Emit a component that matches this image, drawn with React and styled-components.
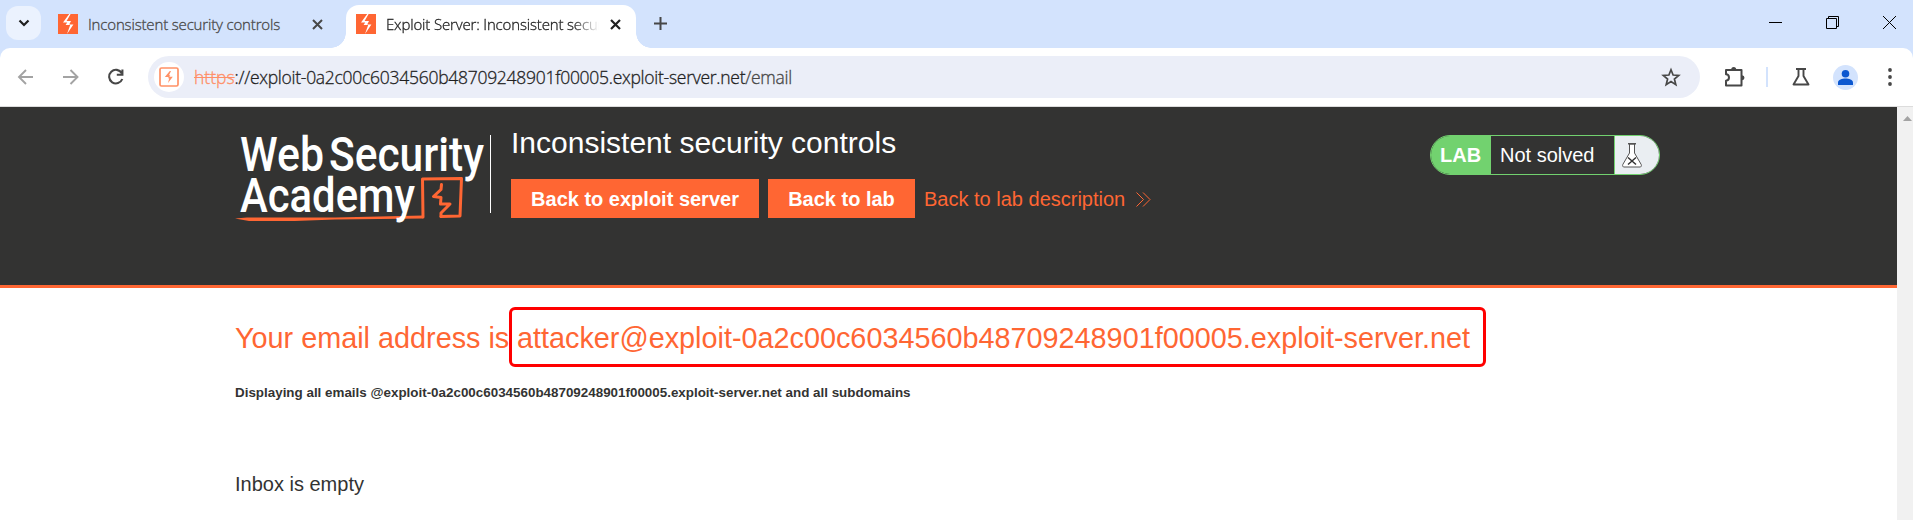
import React from "react";
import styled, { createGlobalStyle } from "styled-components";

const GlobalStyle = createGlobalStyle`
  *, *::before, *::after { box-sizing: border-box; }
  html, body { margin: 0; height: 100%; overflow: hidden; background: #fff; }
  body { font-family: "Liberation Sans", Arial, sans-serif; color: #333332; }
  svg { display: block; flex: none; }
`;

const Browser = styled.div`
  display: flex;
  flex-direction: column;
  height: 520px;
  width: 1913px;
`;

const TabStrip = styled.div`
  display: flex;
  height: 48px;
  flex: none;
  background: #d3e3fd;
  font-family: "Open Sans", "Noto Sans", sans-serif;
  font-weight: 300;
`;

const TabSearch = styled.div`
  width: 35px;
  height: 34px;
  margin: 6px 0 0 6px;
  border-radius: 12px;
  background: #ebf2fe;
  display: flex;
  align-items: center;
  justify-content: center;
`;

const Tab = styled.div`
  position: relative;
  display: flex;
  align-items: center;
  width: ${(p) => p.$width}px;
  height: 43px;
  margin: 5px 0 0 ${(p) => p.$gap}px;
  padding: 0 15px 5px 10px;
  color: ${(p) => (p.$active ? "#1f1f1f" : "#474747")};
  background: ${(p) => (p.$active ? "#fff" : "transparent")};
  border-radius: 13px 13px 0 0;
  ${(p) =>
    p.$active &&
    `
    &::before, &::after {
      content: "";
      position: absolute;
      bottom: 0;
      width: 15px;
      height: 15px;
    }
    &::before {
      left: -15px;
      background: radial-gradient(circle at 0 0, transparent 14.5px, #fff 15px);
    }
    &::after {
      right: -15px;
      background: radial-gradient(circle at 100% 0, transparent 14.5px, #fff 15px);
    }
  `}
`;

const TabTitle = styled.span`
  flex: 1;
  margin-left: 10px;
  margin-right: 11px;
  overflow: hidden;
  white-space: nowrap;
  font-size: 15px;
  line-height: 24px;
  letter-spacing: -0.16px;
  -webkit-text-stroke: 0.3px currentColor;
  ${(p) =>
    p.$fade && "mask-image: linear-gradient(to right, #000 88%, transparent 100%);"}
`;

const NewTab = styled.div`
  margin: 17px 0 0 18px;
`;

const WindowControls = styled.div`
  display: flex;
  gap: 44px;
  margin: 16px 17px 0 auto;
`;

const Toolbar = styled.div`
  display: flex;
  align-items: center;
  height: 59px;
  flex: none;
  background: linear-gradient(#d3e3fd 12px, #fff 12px);
  border-bottom: 1px solid #dcdcdc;
`;

const ToolbarInner = styled.div`
  display: flex;
  align-items: center;
  width: 100%;
  height: 58px;
  padding: 0 20px 0 16px;
  background: #fff;
  border-radius: 10px 10px 0 0;
`;

const NavButtons = styled.div`
  display: flex;
  gap: 25px;
  width: 132px;
`;

const AddressBar = styled.div`
  display: flex;
  align-items: center;
  width: 1552px;
  height: 42px;
  padding: 0 19px 0 6px;
  border-radius: 21px;
  background: #ebeef8;
`;

const SiteChip = styled.div`
  display: flex;
  align-items: center;
  justify-content: center;
  width: 30px;
  height: 30px;
  border-radius: 50%;
  background: #fff;
`;

const Url = styled.div`
  flex: 1;
  margin-left: 10px;
  font-family: "Open Sans", "Noto Sans", sans-serif;
  font-weight: 300;
  font-size: 17.5px;
  line-height: 24px;
  letter-spacing: -0.27px;
  -webkit-text-stroke: 0.3px currentColor;
  white-space: nowrap;
  color: #1f1f1f;
`;

const Scheme = styled.span`
  color: #ff8e66;
  letter-spacing: 0;
  text-decoration: line-through;
`;

const Path = styled.span`
  color: #474747;
`;

const ToolbarActions = styled.div`
  display: flex;
  align-items: center;
  margin-left: 23px;
`;

const Separator = styled.div`
  width: 2px;
  height: 20px;
  margin: 0 24px 0 21px;
  background: #d3e3fd;
`;

const Avatar = styled.div`
  width: 25px;
  height: 25px;
  margin: 0 30px 0 23px;
  border-radius: 50%;
  background: #d3e3fd;
`;

const Viewport = styled.div`
  display: flex;
  flex: 1;
  min-height: 0;
`;

const Page = styled.main`
  flex: 1;
  background: #fff;
`;

const Scrollbar = styled.div`
  width: 16px;
  padding: 9px 0 0 6px;
  background: #f1f1f1;
`;

const LabHeader = styled.header`
  display: flex;
  height: 181px;
  padding: 0 237px 0 235px;
  background: #333332;
  border-bottom: 3px solid #ff6633;
`;

const LogoArea = styled.div`
  width: 256px;
  height: 78px;
  margin-top: 28px;
  border-right: 1px solid #fff;
  svg { overflow: visible; }
`;

const TitleArea = styled.div`
  margin-left: 20px;
`;

const LabTitle = styled.h2`
  margin: 18px 0 0;
  height: 54px;
  font-size: 30px;
  font-weight: 400;
  line-height: 36px;
  color: #fff;
`;

const Actions = styled.div`
  display: flex;
  align-items: center;
  height: 39px;
`;

const Button = styled.a`
  width: ${(p) => p.$width}px;
  height: 39px;
  margin-right: 9px;
  background: #ff6633;
  color: #fff;
  font-size: 20px;
  font-weight: 700;
  line-height: 40px;
  text-align: center;
  white-space: nowrap;
`;

const BackLink = styled.a`
  display: flex;
  align-items: center;
  gap: 11px;
  padding-top: 1px;
  color: #ff6633;
  font-size: 20px;
  white-space: nowrap;
`;

const LabStatus = styled.div`
  display: flex;
  width: 230px;
  height: 40px;
  margin: 28px 0 0 auto;
  border: 1px solid #72d26f;
  border-radius: 20px;
  overflow: hidden;
  color: #fff;
  font-size: 20px;
  line-height: 38px;
`;

const StatusLabel = styled.span`
  width: 60px;
  padding-left: 9px;
  background: #72d26f;
  font-weight: 700;
  line-height: 39px;
`;

const StatusText = styled.span`
  width: 124px;
  padding-left: 9px;
  border-right: 1px solid #72d26f;
`;

const StatusIcon = styled.span`
  flex: 1;
  padding: 7px 0 0 7px;
  background: #eaeef2;
`;

const Content = styled.section`
  padding: 19px 0 0 235px;
`;

const EmailHeading = styled.h1`
  display: flex;
  margin: 0;
  height: 60px;
  font-size: 28.8px;
  font-weight: 400;
  line-height: 56px;
  white-space: nowrap;
  color: #ff6633;
`;

const HeadingLabel = styled.span`
  width: 274px;
  padding-top: 3px;
`;

const Highlight = styled.span`
  width: 977px;
  height: 60px;
  padding-left: 5px;
  border: 3px solid #ff0000;
  border-radius: 6px;
`;

const Note = styled.p`
  margin: 16px 0 0;
  font-size: 13.4px;
  font-weight: 700;
  line-height: 20px;
`;

const Inbox = styled.p`
  margin: 69px 0 0;
  font-size: 20px;
  line-height: 24px;
`;

const Favicon = () => (
  <svg width="20" height="20" viewBox="0 0 20 20">
    <rect width="20" height="20" fill="#ff6633" />
    <path d="M11.2 0 5 8.4h4.2L7.6 11h4.6L9 20l6.4-9.6h-4.2L13 7H8.6L12.6 0Z" fill="#fff" />
  </svg>
);

const CloseIcon = ({ color, width = 2 }) => (
  <svg width="11" height="11" viewBox="0 0 11 11" stroke={color} strokeWidth={width}>
    <path d="m1 1 9 9M10 1l-9 9" />
  </svg>
);

const Logo = () => (
  <svg width="254" height="88" viewBox="0 0 254 88" fontFamily="Roboto, sans-serif" fontSize="48" fontWeight="500" fill="#fff">
    <path d="M0 83.500 12 82.500 100 82.500 188 80.500V83.500L100 84.500 60 86H14Z" fill="#ff6633" />
    <g fill="none" stroke="#ff6633" strokeLinecap="round" strokeLinejoin="round">
      <path d="M188 82 187.500 44 226.500 43.500 225 81 206 81.500" strokeWidth="3" />
      <path d="M206.500 49.500 206 54.500 198.500 61.500 206 62.500 205.500 69 215 69 206 78 206 81.500" strokeWidth="3" />
    </g>
    <text x="5" y="36" textLength="84" lengthAdjust="spacingAndGlyphs">Web</text>
    <text x="94" y="36" textLength="155" lengthAdjust="spacingAndGlyphs">Security</text>
    <text x="5" y="77" textLength="175" lengthAdjust="spacingAndGlyphs">Academy</text>
  </svg>
);

export default function App() {
  return (
    <Browser>
      <GlobalStyle />
      <TabStrip>
        <TabSearch>
          <svg width="12" height="8" viewBox="0 0 12 8" fill="none" stroke="#1f1f1f" strokeWidth="2.2">
            <path d="m1.500 1.500 4.500 4.500 4.500-4.500" />
          </svg>
        </TabSearch>
        <Tab $width={290} $gap={7}>
          <Favicon />
          <TabTitle>Inconsistent security controls</TabTitle>
          <CloseIcon color="#474747" />
        </Tab>
        <Tab $active $width={290} $gap={8}>
          <Favicon />
          <TabTitle $fade>Exploit Server: Inconsistent security controls</TabTitle>
          <CloseIcon color="#1f1f1f" width={2.2} />
        </Tab>
        <NewTab>
          <svg width="13" height="13" viewBox="0 0 13 13" stroke="#474747" strokeWidth="2">
            <path d="M6.500 0v13M0 6.500h13" />
          </svg>
        </NewTab>
        <WindowControls>
          <svg width="13" height="13" viewBox="0 0 13 13" stroke="#000"><path d="M0 6.500h13" /></svg>
          <svg width="13" height="13" viewBox="0 0 13 13" fill="none" stroke="#000">
            <path d="M.5 2.500h10v10H.5zM2.500 2.500v-2h10v10h-2" />
          </svg>
          <svg width="13" height="13" viewBox="0 0 13 13" stroke="#000"><path d="m0 0 13 13M13 0 0 13" /></svg>
        </WindowControls>
      </TabStrip>

      <Toolbar>
        <ToolbarInner>
          <NavButtons>
            <svg width="20" height="20" viewBox="0 0 20 20" fill="none" stroke="#a3a3a3" strokeWidth="1.9">
              <path d="M17 10H3M10 3 3 10l7 7" />
            </svg>
            <svg width="20" height="20" viewBox="0 0 20 20" fill="none" stroke="#a3a3a3" strokeWidth="1.9">
              <path d="M2 10h14M9.500 3l7 7-7 7" />
            </svg>
            <svg width="20" height="20" viewBox="0 0 20 20" fill="none" stroke="#474747" strokeWidth="2.100">
              <path d="M15.800 6.200A6.800 6.800 0 1 0 16.300 12M16.400 2.500v5.300h-5.600" />
            </svg>
          </NavButtons>
          <AddressBar>
            <SiteChip>
              <svg width="20" height="20" viewBox="0 0 20 20">
                <rect x="1" y="1" width="18" height="18" rx="1.500" fill="none" stroke="#ff9166" strokeWidth="1.700" />
                <path d="M10.800 4 5.800 10h4l-1 1.200h1.400L9 16l4.800-6.300h-3.500l1-1.500H10L12 4Z" fill="#ff9166" />
              </svg>
            </SiteChip>
            <Url>
              <Scheme>https</Scheme>://exploit-0a2c00c6034560b48709248901f00005.exploit-server.net<Path>/email</Path>
            </Url>
            <svg width="20" height="20" viewBox="0 0 20 20" fill="none" stroke="#474747" strokeWidth="1.700">
              <path d="m10 2.800 2.100 5.200 5.600.4-4.300 3.600 1.400 5.600-4.800-3-4.800 3 1.400-5.600-4.300-3.600 5.600-.4Z" />
            </svg>
          </AddressBar>
          <ToolbarActions>
            <svg width="22" height="22" viewBox="0 0 22 22">
              <path d="M3 4h15.500v15.500H3v-4.700c4-.6 4-6.200 0-6.500Z" fill="none" stroke="#474747" strokeWidth="2" strokeLinejoin="round" />
              <path d="M8.200 3.500a2.500 2.500 0 0 1 5 0ZM19 9.200a2.500 2.500 0 0 1 0 5Z" fill="#474747" />
            </svg>
            <Separator />
            <svg width="18" height="20" viewBox="0 0 18 20" fill="none" stroke="#474747" strokeWidth="1.900">
              <path d="M4 2h10M6.500 2v7L1.500 17.500h15L11.500 9V2" strokeLinejoin="round" />
            </svg>
            <Avatar>
              <svg width="25" height="25" viewBox="0 0 25 25" fill="#0b57d0">
                <circle cx="12.500" cy="8.700" r="3.800" />
                <path d="M5 20v-2.500c0-2.700 4.200-4 7.500-4s7.500 1.300 7.500 4V20Z" />
              </svg>
            </Avatar>
            <svg width="4" height="20" viewBox="0 0 4 20" fill="#474747">
              <circle cx="2" cy="3" r="1.900" /><circle cx="2" cy="10" r="1.900" /><circle cx="2" cy="17" r="1.900" />
            </svg>
          </ToolbarActions>
        </ToolbarInner>
      </Toolbar>

      <Viewport>
        <Page>
          <LabHeader>
            <LogoArea><Logo /></LogoArea>
            <TitleArea>
              <LabTitle>Inconsistent security controls</LabTitle>
              <Actions>
                <Button $width={248}>Back to exploit server</Button>
                <Button $width={147}>Back to lab</Button>
                <BackLink>
                  Back to lab description
                  <svg width="15" height="15" viewBox="0 0 15 15" fill="none" stroke="#ff6633">
                    <path d="m.5.500 7 7-7 7M7 .5l7 7-7 7" />
                  </svg>
                </BackLink>
              </Actions>
            </TitleArea>
            <LabStatus>
              <StatusLabel>LAB</StatusLabel>
              <StatusText>Not solved</StatusText>
              <StatusIcon>
                <svg width="20" height="25" viewBox="0 0 20 25" fill="#fff" stroke="#555">
                  <path d="M7.500 1v9L.8 21.500c-.5 1.500 0 2.500 1.200 2.500h16c1.200 0 1.700-1 1.200-2.500L12.500 10V1Z" />
                  <path d="M6 .8h8" strokeWidth="1.500" />
                  <path d="m6 14.500 8 7M14 14.500l-8 7" stroke="#333" strokeWidth="1.500" />
                </svg>
              </StatusIcon>
            </LabStatus>
          </LabHeader>
          <Content>
            <EmailHeading>
              <HeadingLabel>Your email address is</HeadingLabel>
              <Highlight>attacker@exploit-0a2c00c6034560b48709248901f00005.exploit-server.net</Highlight>
            </EmailHeading>
            <Note>Displaying all emails @exploit-0a2c00c6034560b48709248901f00005.exploit-server.net and all subdomains</Note>
            <Inbox>Inbox is empty</Inbox>
          </Content>
        </Page>
        <Scrollbar>
          <svg width="9" height="5" viewBox="0 0 9 5" fill="#a3a3a3"><path d="M4.500 0 9 5H0Z" /></svg>
        </Scrollbar>
      </Viewport>
    </Browser>
  );
}
